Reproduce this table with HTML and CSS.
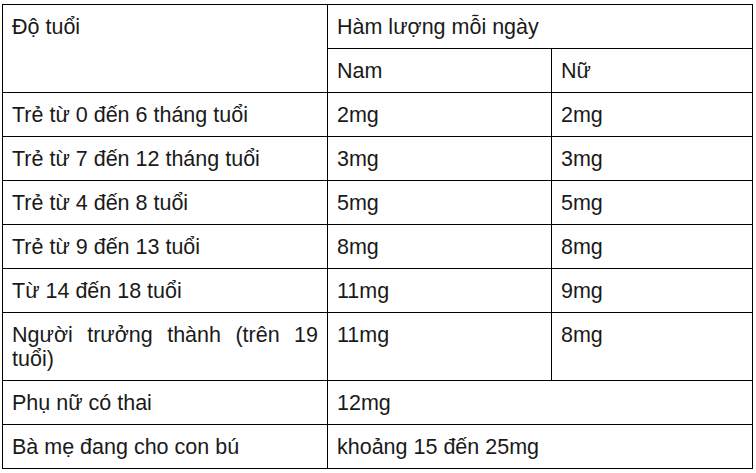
FILE: index.html
```html
<!DOCTYPE html>
<html lang="vi">
<head>
<meta charset="utf-8">
<link rel="stylesheet" href="styles.css">
</head>
<body>
<table class="zinc">
  <colgroup>
    <col class="c1">
    <col class="c2">
    <col class="c3">
  </colgroup>
  <tr>
    <td rowspan="2">Độ tuổi</td>
    <td colspan="2">Hàm lượng mỗi ngày</td>
  </tr>
  <tr>
    <td>Nam</td>
    <td>Nữ</td>
  </tr>
  <tr><td>Trẻ từ 0 đến 6 tháng tuổi</td><td>2mg</td><td>2mg</td></tr>
  <tr><td>Trẻ từ 7 đến 12 tháng tuổi</td><td>3mg</td><td>3mg</td></tr>
  <tr><td>Trẻ từ 4 đến 8 tuổi</td><td>5mg</td><td>5mg</td></tr>
  <tr><td>Trẻ từ 9 đến 13 tuổi</td><td>8mg</td><td>8mg</td></tr>
  <tr><td>Từ 14 đến 18 tuổi</td><td>11mg</td><td>9mg</td></tr>
  <tr><td class="just">Người trưởng thành (trên 19 tuổi)</td><td>11mg</td><td>8mg</td></tr>
  <tr><td>Phụ nữ có thai</td><td colspan="2">12mg</td></tr>
  <tr><td>Bà mẹ đang cho con bú</td><td colspan="2">khoảng 15 đến 25mg</td></tr>
</table>
</body>
</html>
```
FILE: styles.css
```css
html, body {
  margin: 0;
  background: #fff;
}
body {
  padding: 4px 0 0 2px;
  font-family: "Liberation Sans", Arial, sans-serif;
  font-size: 21.5px;
  color: #1a1a1a;
}
.zinc {
  border-collapse: collapse;
  table-layout: fixed;
  width: 750px;
}
.c1 { width: 325px; }
.c2 { width: 224px; }
.c3 { width: 201px; }
.zinc td {
  border: 1px solid #000;
  padding: 10px 9px 9px 9px;
  line-height: 24px;
  vertical-align: top;
  text-align: left;
}
.zinc td.just {
  text-align: justify;
}
```
